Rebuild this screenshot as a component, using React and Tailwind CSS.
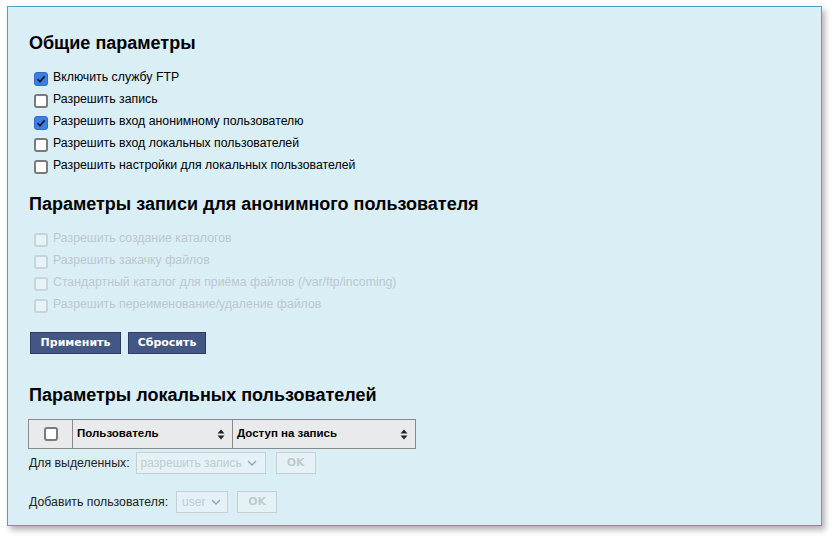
import React from "react";

function Box({ checked, disabled }) {
  if (checked) {
    return (
      <span className="block w-[14px] h-[14px] rounded-[3px] bg-[#3c7fe0] border border-[#2f6cc8] flex items-center justify-center shrink-0">
        <svg width="10" height="10" viewBox="0 0 10 10">
          <path d="M1.5 5.2 L4 7.7 L8.6 2.4" fill="none" stroke="#0d1f3c" strokeWidth="1.8" />
        </svg>
      </span>
    );
  }
  return (
    <span
      className={
        "block w-[14px] h-[14px] rounded-[3px] border-2 shrink-0 " +
        (disabled ? "border-[#c9d3d8] bg-[#e6f3f8]" : "border-[#7a7a7a] bg-white")
      }
    />
  );
}

function Row({ label, checked, disabled }) {
  return (
    <div className="flex items-center h-[22px] gap-[5px] pl-[5px]">
      <span className="block mt-[3px]">
        <Box checked={checked} disabled={disabled} />
      </span>
      <span className={"text-[12.3px] leading-none " + (disabled ? "text-[#bcc8ce]" : "text-black")}>{label}</span>
    </div>
  );
}

function Sort() {
  return (
    <svg width="8" height="11" viewBox="0 0 8 11" className="shrink-0">
      <path d="M4 0.5 L7.5 4.5 L0.5 4.5 Z" fill="#222" />
      <path d="M4 10.5 L7.5 6.5 L0.5 6.5 Z" fill="#222" />
    </svg>
  );
}

function Chevron() {
  return (
    <svg width="10" height="6" viewBox="0 0 10 6">
      <path d="M1 1 L5 5 L9 1" fill="none" stroke="#9aa3a8" strokeWidth="1.3" />
    </svg>
  );
}

export default function App() {
  return (
    <div className="w-[835px] h-[540px] bg-white pt-[6px] pl-[7px]" style={{ fontFamily: '"Liberation Sans", Arial, sans-serif' }}>
      <div className="w-[815px] h-[520px] bg-[#daeef6] border border-[#4fa3c2] shadow-[3px_4px_6px_rgba(0,0,0,0.3)] pl-[21px] pt-[27px]">
        <h2 className="text-[18px] font-bold leading-none text-black">Общие параметры</h2>
        <div className="mt-[14px]">
          <Row label="Включить службу FTP" checked />
          <Row label="Разрешить запись" />
          <Row label="Разрешить вход анонимному пользователю" checked />
          <Row label="Разрешить вход локальных пользователей" />
          <Row label="Разрешить настройки для локальных пользователей" />
        </div>
        <h2 className="text-[18px] font-bold leading-none text-black mt-[19px]">Параметры записи для анонимного пользователя</h2>
        <div className="mt-[14px]">
          <Row label="Разрешить создание каталогов" disabled />
          <Row label="Разрешить закачку файлов" disabled />
          <Row label="Стандартный каталог для приёма файлов (/var/ftp/incoming)" disabled />
          <Row label="Разрешить переименование/удаление файлов" disabled />
        </div>
        <div className="flex gap-[7px] mt-[17px] ml-[1px]" style={{ fontFamily: '"DejaVu Sans", sans-serif' }}>
          <button className="w-[91px] h-[22px] bg-[#435784] border border-[#2c3c63] text-white text-[11px] font-bold">Применить</button>
          <button className="w-[78px] h-[22px] bg-[#435784] border border-[#2c3c63] text-white text-[11px] font-bold">Сбросить</button>
        </div>
        <h2 className="text-[18px] font-bold leading-none text-black mt-[32px]">Параметры локальных пользователей</h2>
        <div className="mt-[15px] -ml-[1px] w-[388px] h-[30px] flex bg-[#e9eaeb] border border-[#8a8a8a]">
          <div className="w-[44px] border-r border-[#8a8a8a] flex items-center justify-center">
            <span className="block w-[14px] h-[14px] rounded-[3px] border-2 border-[#7a7a7a] bg-white" />
          </div>
          <div className="w-[160px] border-r border-[#8a8a8a] flex items-center justify-between pl-[4px] pr-[7px]">
            <span className="text-[11.5px] font-bold">Пользователь</span>
            <Sort />
          </div>
          <div className="flex-1 flex items-center justify-between pl-[4px] pr-[7px]">
            <span className="text-[11.5px] font-bold">Доступ на запись</span>
            <Sort />
          </div>
        </div>
        <div className="flex items-center mt-[3px] h-[22px]">
          <span className="text-[12.3px] text-[#222]">Для выделенных:</span>
          <div className="ml-[6px] w-[130px] h-[22px] border border-[#c6d0d4] bg-[#e4f2f7] flex items-center justify-between pl-[4px] pr-[8px]">
            <span className="text-[12px] text-[#c2cacd]">разрешить запись</span>
            <Chevron />
          </div>
          <div className="ml-[10px] w-[40px] h-[22px] border border-[#c6d0d4] bg-[#e4f2f7] flex items-center justify-center text-[11px] font-bold text-[#c2cacd]" style={{ fontFamily: '"DejaVu Sans", sans-serif' }}>OK</div>
        </div>
        <div className="flex items-center mt-[17px] h-[22px]">
          <span className="text-[12.3px] text-[#222]">Добавить пользователя:</span>
          <div className="ml-[8px] w-[52px] h-[22px] border border-[#c6d0d4] bg-[#e4f2f7] flex items-center justify-between pl-[5px] pr-[6px]">
            <span className="text-[12px] text-[#c2cacd]">user</span>
            <Chevron />
          </div>
          <div className="ml-[9px] w-[40px] h-[22px] border border-[#c6d0d4] bg-[#e4f2f7] flex items-center justify-center text-[11px] font-bold text-[#c2cacd]" style={{ fontFamily: '"DejaVu Sans", sans-serif' }}>OK</div>
        </div>
      </div>
    </div>
  );
}
